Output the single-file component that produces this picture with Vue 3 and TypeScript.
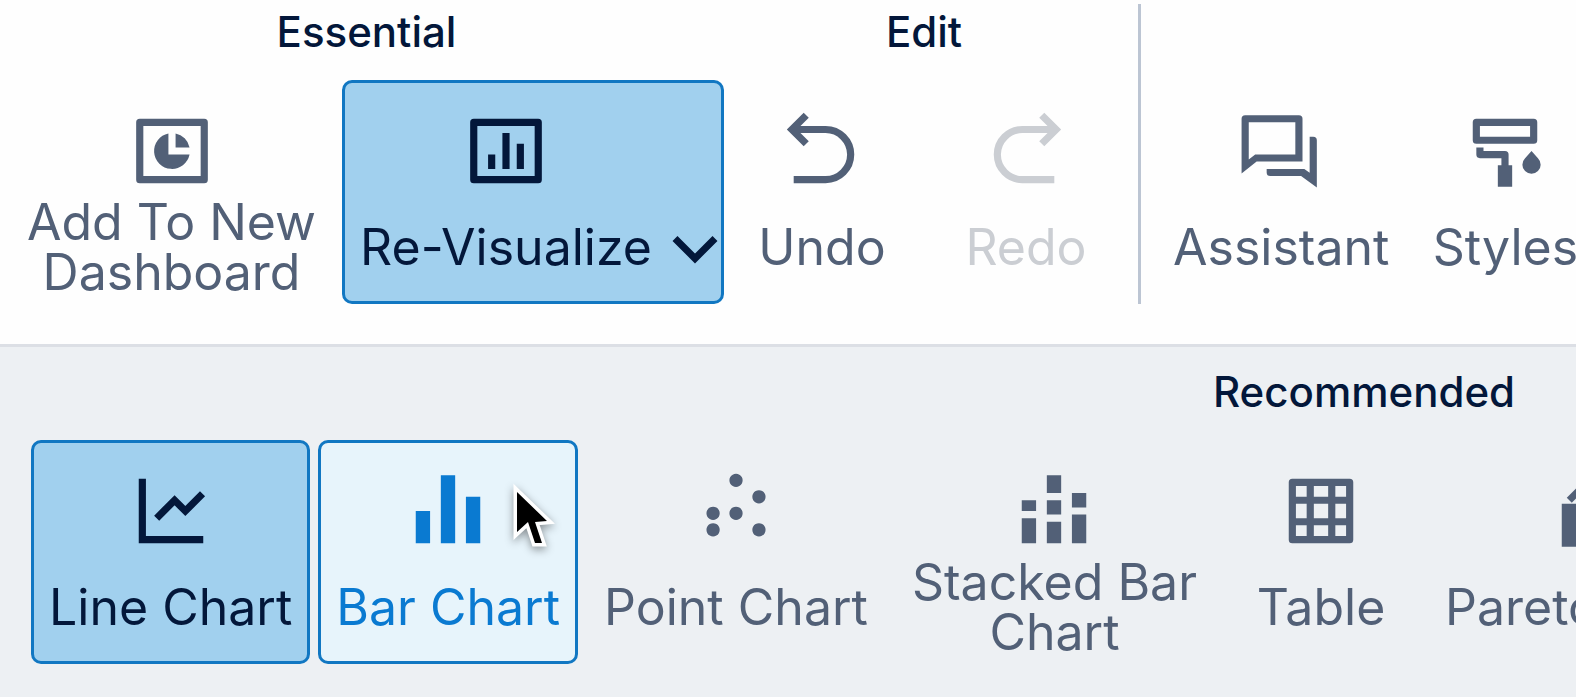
<script setup lang="ts">
type ToolState = 'normal' | 'active' | 'hover' | 'disabled'

interface Tool {
  label: string
  icon: string
  state?: ToolState
  menu?: boolean
}

interface Group {
  title: string
  divided?: boolean
  tools: Tool[]
}

const groups: Group[] = [
  {
    title: 'Essential',
    tools: [
      { label: 'Add To New\nDashboard', icon: 'pie' },
      { label: 'Re-Visualize', icon: 'framedBars', state: 'active', menu: true },
    ],
  },
  {
    title: 'Edit',
    tools: [
      { label: 'Undo', icon: 'undo' },
      { label: 'Redo', icon: 'redo', state: 'disabled' },
    ],
  },
  { title: '', divided: true, tools: [{ label: 'Assistant', icon: 'chat' }] },
  { title: '', tools: [{ label: 'Styles', icon: 'roller' }] },
]

const charts: Tool[] = [
  { label: 'Line Chart', icon: 'line', state: 'active' },
  { label: 'Bar Chart', icon: 'bars', state: 'hover' },
  { label: 'Point Chart', icon: 'points' },
  { label: 'Stacked Bar\nChart', icon: 'stacked' },
  { label: 'Table', icon: 'table' },
  { label: 'Pareto Chart', icon: 'pareto' },
]

const frame = 'M3 3h18a1 1 0 0 1 1 1v16a1 1 0 0 1-1 1H3a1 1 0 0 1-1-1V4a1 1 0 0 1 1-1zM4 5v14h16V5z'

const fills: Record<string, string> = {
  pie: frame + 'M11 7.1A5 5 0 1 0 16.9 13H11zM13 7.1V11h3.9A5 5 0 0 0 13 7.1z',
  framedBars: frame + 'M7 13h2v4H7zM11 7h2v10h-2zM15 10h2v7h-2z',
  chat:
    'M2 2h15a1 1 0 0 1 1 1v11.9H5.2L1 18.3V3a1 1 0 0 1 1-1zM3 4v10.4L4.8 13H16V4z' +
    'M20 8h1a1 1 0 0 1 1 1v13.2L17.6 19H9a1 1 0 0 1-1-1v-1h10.5L20 18.1z',
  roller:
    'M4 3h16a1 1 0 0 1 1 1v5a1 1 0 0 1-1 1H4a1 1 0 0 1-1-1V4a1 1 0 0 1 1-1zM5 5v3h14V5z' +
    'M4 11h2v1h6a1 1 0 0 1 1 1v3h1v6h-4v-6h1v-2H5a1 1 0 0 1-1-1z' +
    'M19.4 12l1.8 2a2.55 2.55 0 1 1-3.6 0z',
  bars: 'M3 12h4v9H3zM10 2h4v19h-4zM17 8h4v13h-4z',
  stacked:
    'M3 9h4v3H3zM3 14h4v7H3zM10 2h4v5h-4zM10 9h4v4h-4zM10 15h4v6h-4zM17 7h4v4h-4zM17 13h4v8h-4z',
  table:
    'M4 3h16a1 1 0 0 1 1 1v16a1 1 0 0 1-1 1H4a1 1 0 0 1-1-1V4a1 1 0 0 1 1-1z' +
    'M5 5v3h3V5zM10 5v3h4V5zM16 5v3h3V5zM5 10v4h3v-4zM10 10v4h4v-4zM16 10v4h3v-4zM5 16v3h3v-3zM10 16v3h4v-3zM16 16v3h3v-3z',
  pareto: 'M3 10h4v12H3zM10 13h4v9h-4zM17 16h4v6h-4zM4.4 8.3L9.5 3.2l4 3.6 6-5.6 1.4 1.4-7.4 7-4-3.6L5.8 9.7z',
  points:
    'M5.6 10.8a1.85 1.85 0 1 0 .01 0zM5.6 15.4a1.85 1.85 0 1 0 .01 0zM12 1.6a1.85 1.85 0 1 0 .01 0z' +
    'M12 10.8a1.85 1.85 0 1 0 .01 0zM18.4 6.2a1.85 1.85 0 1 0 .01 0zM18.4 15.4a1.85 1.85 0 1 0 .01 0z',
}

const strokes: Record<string, string> = {
  undo: 'M3.6 6H13a7 7 0 0 1 0 14H4.1M7.6 2L3.6 6l4 4',
  redo: 'M20.4 6H11a7 7 0 0 0 0 14H19.9M16.4 2L20.4 6l-4 4',
  line: 'M4 3V20H21M8 14l5-5 3 3 4.8-4.8',
}
</script>

<template>
  <div class="app">
    <header class="bar">
      <template v-for="group in groups" :key="group.tools[0].label">
        <div v-if="group.divided" class="divider" role="separator"></div>
        <section class="group">
          <component :is="group.title ? 'h2' : 'div'" class="title">{{ group.title }}</component>
          <div class="tools">
            <button
              v-for="tool in group.tools"
              :key="tool.label"
              type="button"
              class="tool"
              :class="[tool.state, { menu: tool.menu }]"
              :disabled="tool.state === 'disabled'"
            >
              <span class="face">
                <svg class="icon" viewBox="0 0 24 24" aria-hidden="true">
                  <path v-if="fills[tool.icon]" class="fill" :d="fills[tool.icon]" />
                  <path v-else class="stroke" :d="strokes[tool.icon]" />
                </svg>
                <span class="label">{{ tool.label }}</span>
              </span>
              <svg v-if="tool.menu" class="chevron" viewBox="0 0 46 30" aria-hidden="true">
                <path d="M3 3.5L23 23.5L43 3.5" />
              </svg>
            </button>
          </div>
        </section>
      </template>
    </header>

    <main class="bar charts">
      <section class="group gallery">
        <h2 class="title">Recommended</h2>
        <div class="tools">
          <button
            v-for="tool in charts"
            :key="tool.label"
            type="button"
            class="tool"
            :class="tool.state"
            :aria-pressed="tool.state === 'active'"
          >
            <span class="face">
              <svg class="icon" viewBox="0 0 24 24" aria-hidden="true">
                <path v-if="fills[tool.icon]" class="fill" :d="fills[tool.icon]" />
                <path v-else class="stroke" :d="strokes[tool.icon]" />
              </svg>
              <span class="label">{{ tool.label }}</span>
            </span>
            <svg v-if="tool.state === 'hover'" class="cursor" viewBox="0 0 44 66" aria-hidden="true">
              <path d="M4 5V45L15 35L22 56H29L22 35L34 34Z" />
            </svg>
          </button>
        </div>
      </section>
    </main>
  </div>
</template>

<style>
body {
  margin: 0;
  background: #edf0f3;
}
</style>

<style scoped>
.app {
  min-height: 100vh;
  overflow: hidden;
  background: #edf0f3;
  color: #526077;
  font-family: Inter, 'Liberation Sans', sans-serif;
}

.bar {
  display: flex;
  padding: 0 9px 40px;
  border-bottom: 3px solid #dcdfe5;
  background: #fefefe;
}

.charts {
  padding: 13px 31px 32px;
  border-bottom: 0;
  background: #edf0f3;
}

.group {
  flex: none;
}

.gallery {
  width: 2666px;
}

.title {
  height: 64px;
  margin: 0 0 16px;
  color: #03173a;
  font-size: 42px;
  font-weight: 500;
  line-height: 64px;
  text-align: center;
}

.tools {
  display: flex;
  gap: 8px;
}

.divider {
  flex: none;
  width: 3px;
  margin: 4px 14px 0;
  background: #bcc5d3;
}

.tool {
  position: relative;
  display: flex;
  flex: none;
  align-items: flex-end;
  justify-content: center;
  box-sizing: border-box;
  min-width: 196px;
  height: 224px;
  padding: 0 15px 4px;
  border: 3px solid transparent;
  border-radius: 10px;
  background: transparent;
  color: inherit;
  font: inherit;
}

.face {
  display: flex;
  flex-direction: column;
  align-items: center;
}

.icon {
  width: 86px;
  height: 86px;
  margin-bottom: 3px;
}

.fill {
  fill: currentColor;
  fill-rule: evenodd;
}

.stroke {
  fill: none;
  stroke: currentColor;
  stroke-width: 2;
}

.label {
  display: flex;
  align-items: center;
  height: 100px;
  font-size: 50px;
  line-height: 50px;
  text-align: center;
  white-space: pre;
}

.active {
  border-color: #1177c2;
  background: #a1d0ee;
  color: #03173a;
}

.hover {
  border-color: #1177c2;
  background: #e7f4fb;
  color: #0a7ad1;
}

.disabled {
  color: #cbced3;
}

.menu {
  gap: 20px;
  padding-right: 3px;
}

.chevron {
  width: 46px;
  height: 30px;
  margin-bottom: 32px;
  fill: none;
  stroke: currentColor;
  stroke-width: 7;
}

.cursor {
  position: absolute;
  top: 44px;
  right: 18px;
  width: 44px;
  height: 66px;
  overflow: visible;
  fill: #000;
  stroke: #fff;
  stroke-width: 7;
  paint-order: stroke;
  filter: drop-shadow(0 3px 4px rgb(0 0 0 / 40%));
}
</style>
